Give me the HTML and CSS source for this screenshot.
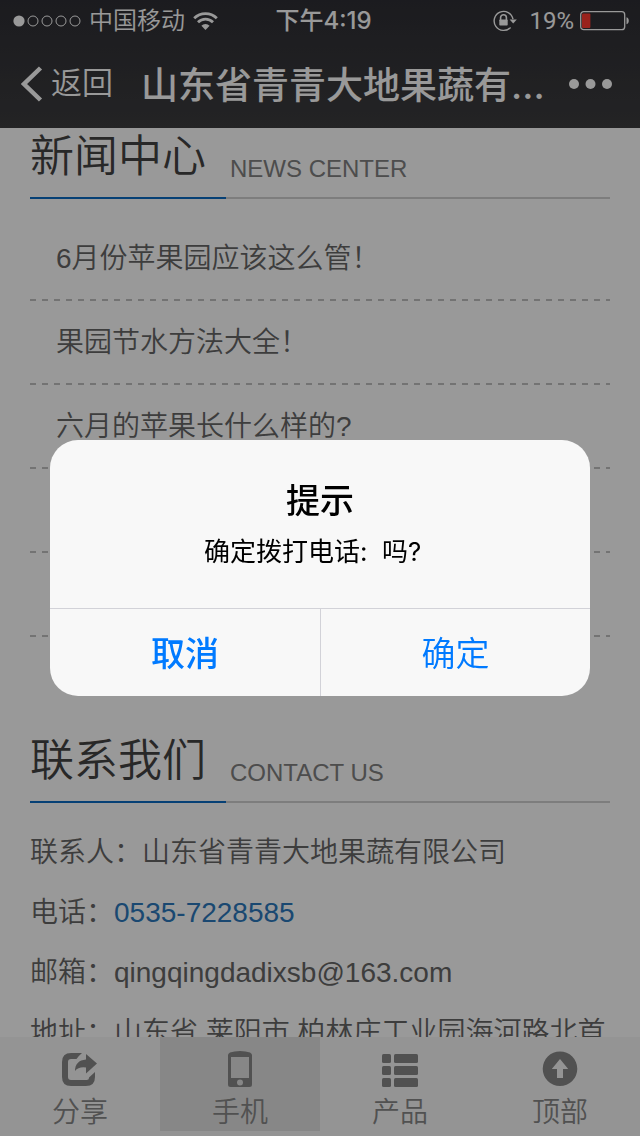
FILE: index.html
```
<!DOCTYPE html>
<html lang="zh-CN">
<head>
  <meta charset="UTF-8">
  <meta name="viewport" content="width=device-width, initial-scale=1.0">
  <title>山东省青青大地果蔬有限公司</title>
  <link rel="stylesheet" href="styles.css">
</head>

<body>
  <div class="page">
    <header class="topbar">
      <div class="status">
        <div class="status-left">
          <svg class="signal" width="68" height="12" viewBox="0 0 68 12" aria-hidden="true">
            <circle cx="6" cy="6" r="5.6" fill="currentColor"/>
            <g fill="none" stroke="currentColor">
              <circle cx="20" cy="6" r="5"/><circle cx="34" cy="6" r="5"/>
              <circle cx="48" cy="6" r="5"/><circle cx="62" cy="6" r="5"/>
            </g>
          </svg>
          <span>中国移动</span>
          <svg class="wifi" width="25" height="18" viewBox="0 0 25 18" aria-hidden="true">
            <g fill="none" stroke="currentColor" stroke-width="2.8">
              <path d="M1.2 6.2a16 16 0 0 1 22.6 0"/>
              <path d="M5 10.2a10.6 10.6 0 0 1 15 0"/>
            </g>
            <path d="M8.4 13.8a5.8 5.8 0 0 1 8.2 0L12.5 18z" fill="currentColor"/>
          </svg>
        </div>
        <time class="clock">下午4:19</time>
        <div class="status-right">
          <svg class="lock" width="24" height="22" viewBox="0 0 24 22" aria-hidden="true">
            <g fill="none" stroke="currentColor">
              <path stroke-width="1.4" d="M20 9.2A9.5 9.5 0 1 0 17.6 17.4"/>
              <path stroke-width="1.6" d="M7.6 10V7.6a2.9 2.9 0 0 1 5.8 0V10"/>
            </g>
            <rect x="6.3" y="9.4" width="8.4" height="6.2" rx=".8" fill="currentColor"/>
            <path d="M16.6 9.4h7.2L20.2 13.4z" fill="currentColor"/>
          </svg>
          <span class="percent">19%</span>
          <svg class="battery" width="50" height="20" viewBox="0 0 50 20" aria-hidden="true">
            <rect x=".7" y=".7" width="44" height="18" rx="3" fill="none" stroke="currentColor" stroke-width="1.3"/>
            <rect x="2" y="2.4" width="8.4" height="14.6" rx="1" fill="#ff3a30"/>
            <path d="M46.5 6.2c3 .6 3 6.4 0 7z" fill="currentColor"/>
          </svg>
        </div>
      </div>
      <nav class="navbar">
        <button class="back" type="button">
          <svg width="22" height="36" viewBox="0 0 22 36" aria-hidden="true">
            <path d="M19.500 2 3 18l16.500 16" fill="none" stroke="currentColor" stroke-width="4.500"/>
          </svg>
          <span>返回</span>
        </button>
        <h1 class="nav-title">山东省青青大地果蔬有...</h1>
        <button class="more" type="button" aria-label="更多">
          <svg width="43" height="10" viewBox="0 0 43 10" fill="currentColor" aria-hidden="true">
            <circle cx="5" cy="5" r="5"/><circle cx="21.5" cy="5" r="5"/><circle cx="38" cy="5" r="5"/>
          </svg>
        </button>
      </nav>
    </header>

    <main class="content">
      <section class="news">
        <div class="section-head">
          <h2>新闻中心</h2>
          <span>NEWS CENTER</span>
        </div>
        <ul class="news-list">
          <li><a href="#">6月份苹果园应该这么管！</a></li>
          <li><a href="#">果园节水方法大全！</a></li>
          <li><a href="#">六月的苹果长什么样的?</a></li>
          <li></li>
          <li></li>
        </ul>
      </section>

      <section class="contact">
        <div class="section-head">
          <h2>联系我们</h2>
          <span>CONTACT US</span>
        </div>
        <address class="contact-list">
          <p>联系人：山东省青青大地果蔬有限公司</p>
          <p>电话：<a href="tel:0535-7228585">0535-7228585</a></p>
          <p>邮箱：qingqingdadixsb@163.com</p>
          <p>地址：山东省 莱阳市 柏林庄工业园海河路北首</p>
        </address>
      </section>
    </main>

    <footer class="tabs">
      <button class="tab" type="button">
        <svg width="36" height="36" viewBox="0 0 36 36" fill="currentColor" aria-hidden="true">
          <path d="M20 2H9Q0 2 0 11V26Q0 35 9 35H24Q33 35 33 26V21L27 26.500Q27 29 24.500 29H9Q6 29 6 26V11Q6 8 9 8H14.500Q17 4.500 20 2z"/>
          <path d="M24 3 35 12.500 24 22.500V16.500Q16.500 15.500 13 20Q13 9.500 24 8.500z"/>
        </svg>
        分享
      </button>
      <button class="tab pressed" type="button">
        <svg width="36" height="36" viewBox="0 0 36 36" fill="currentColor" aria-hidden="true">
          <path fill-rule="evenodd" d="M6 4Q6 2.500 8 1.500Q12 0 18 0T28 1.500Q30 2.500 30 4V33.500Q30 36 27.500 36H8.500Q6 36 6 33.500zM9 6V27H27V6zM18 28.500a3 3 0 1 0 0 6a3 3 0 0 0 0-6z"/>
        </svg>
        手机
      </button>
      <button class="tab" type="button">
        <svg width="36" height="36" viewBox="0 0 36 36" fill="currentColor" aria-hidden="true">
          <rect x="0" y="3" width="9" height="9" rx="1.5"/><rect x="12" y="3" width="24" height="9" rx="1.5"/>
          <rect x="0" y="15" width="9" height="9" rx="1.5"/><rect x="12" y="15" width="24" height="9" rx="1.5"/>
          <rect x="0" y="27" width="9" height="9" rx="1.5"/><rect x="12" y="27" width="24" height="9" rx="1.5"/>
        </svg>
        产品
      </button>
      <button class="tab" type="button">
        <svg width="36" height="36" viewBox="0 0 36 36" fill="currentColor" aria-hidden="true">
          <path fill-rule="evenodd" d="M18 .5a17.300 17.300 0 1 0 0 34.600a17.300 17.300 0 0 0 0-34.600zM18 8 26.200 18H21V27H15V18H9.800z"/>
        </svg>
        顶部
      </button>
    </footer>
  </div>

  <!-- call confirmation -->
  <div class="overlay">
    <div class="dialog" role="alertdialog" aria-modal="true" aria-labelledby="dialogTitle" aria-describedby="dialogText">
      <div class="dialog-body">
        <h2 id="dialogTitle">提示</h2>
        <p id="dialogText">确定拨打电话:&nbsp; 吗?&nbsp;&nbsp;</p>
      </div>
      <div class="dialog-actions">
        <button class="cancel" type="button">取消</button>
        <button class="confirm" type="button">确定</button>
      </div>
    </div>
  </div>
</body>
</html>
```
FILE: styles.css
```
*{box-sizing:border-box}
html,body{margin:0;padding:0;height:100%}
body{font-family:"Liberation Sans","Noto Sans CJK SC",sans-serif;font-size:28px;color:#666;background:#fff}
h1,h2,p,ul{margin:0;padding:0}
button{border:0;padding:0;background:none;font:inherit;color:inherit}
svg{flex:none;display:block}
a{color:inherit;text-decoration:none}

.page{display:flex;flex-direction:column;height:100vh;overflow:hidden}

/* top bar */
.topbar{flex:none;color:#fff;font-family:Inter,"Noto Sans CJK SC",sans-serif;
        background:linear-gradient(#2e2e34,#3c3c3e)}
.status{display:grid;grid-template-columns:1fr auto 1fr;align-items:center;
        height:40px;padding:1px 10px 0 13px;font-size:24px;line-height:40px}
.status-left,.status-right{display:flex;align-items:center}
.status-left{gap:8px;font-weight:350}
.status-right{justify-content:flex-end;gap:6px}
.clock{padding-left:4px;font-weight:500}
.percent{font-family:Roboto,sans-serif}
.lock{margin-right:6px}
.navbar{display:flex;align-items:center;height:88px;padding:0 28px 0 21px}
.back{display:flex;align-items:center;gap:8px;font-size:31px;font-weight:350;line-height:44px}
.back span{padding-bottom:2px}
.nav-title{flex:1;min-width:0;padding:0 0 2px 28px;font-size:37px;font-weight:500;
           white-space:nowrap;overflow:hidden}

/* content */
.content{flex:1;min-height:0;overflow:hidden;padding:0 30px}
.section-head{display:flex;height:71px;border-bottom:2px solid #d0d0d0}
.section-head h2{height:71px;padding-right:20px;border-bottom:2px solid #0b6cc4;
                 font-size:44px;font-weight:350;line-height:58px;color:#444}
.section-head span{padding-left:4px;font-size:24px;line-height:82px;color:#808080}
.news-list{list-style:none;padding-top:18px}
.news-list li{height:84px;padding:0 26px;line-height:84px;font-weight:350;
              background:repeating-linear-gradient(90deg,#c0c0c0 0 6px,transparent 6px 12px) left bottom/100% 2px no-repeat}
.contact{margin-top:95px}
.contact-list{padding-top:20px;font-style:normal;font-weight:350;line-height:60px}
.contact-list a{color:#2c79bd}

/* bottom tabs */
.tabs{flex:none;display:grid;grid-template-columns:repeat(4,1fr);padding-bottom:5px;background:#f7f7f7;color:#888}
.tab{display:flex;flex-direction:column;align-items:center;gap:6px;height:94px;padding-top:14px;
     font-weight:350;line-height:40px}
.pressed{background:#e2e2e2}

/* dialog */
.overlay{position:fixed;inset:0;display:flex;align-items:center;justify-content:center;
         padding:0 50px;background:rgba(0,0,0,.4)}
.dialog{width:100%;max-width:540px;border-radius:28px;overflow:hidden;background:#f8f8f8;color:#000;
        font-family:Inter,"Noto Sans CJK SC",sans-serif;text-align:center}
.dialog-body{padding:36px 32px 34px}
.dialog-body h2{font-size:34px;font-weight:500;line-height:50px}
.dialog-body p{padding-top:4px;font-size:26px;line-height:44px}
.dialog-actions{display:grid;grid-template-columns:1fr 1fr;border-top:1px solid #d2d2d8;color:#007aff}
.dialog-actions button{height:87px;padding-bottom:2px;font-size:34px}
.dialog-actions .cancel{font-weight:500}
.dialog-actions .confirm{border-left:1px solid #d2d2d8;font-weight:350}
```
